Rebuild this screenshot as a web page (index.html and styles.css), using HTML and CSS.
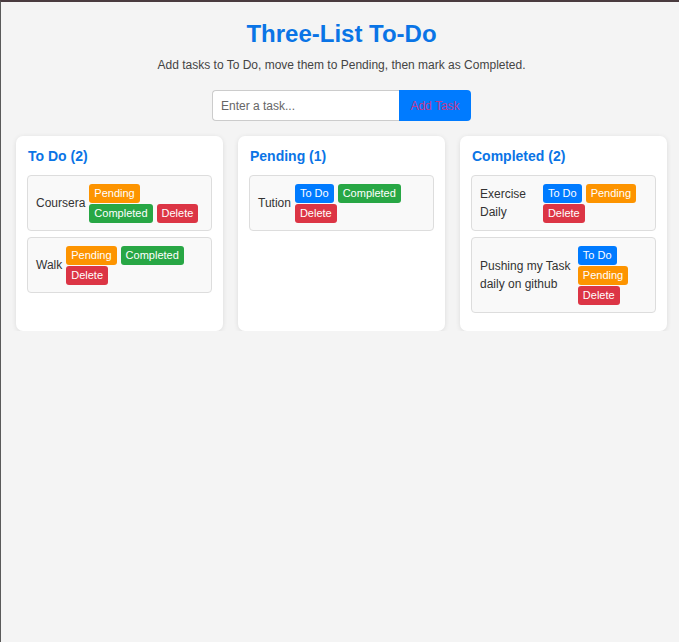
FILE: index.html
```html
<!DOCTYPE html>
<html lang="en">
<head>
<meta charset="utf-8">
<title>Three-List To-Do</title>
<link rel="stylesheet" href="styles.css">
</head>
<body>
<h1 class="title">Three-List To-Do</h1>
<p class="subtitle">Add tasks to To Do, move them to Pending, then mark as Completed.</p>
<div class="add-row">
  <input class="task-input" type="text" placeholder="Enter a task...">
  <button class="add-btn">Add Task</button>
</div>
<div class="lists">
  <section class="card">
    <h3 class="card-title">To Do (2)</h3>
    <div class="item">
      <span class="item-text">Coursera</span>
      <div class="actions">
        <button class="btn btn-pending">Pending</button>
        <button class="btn btn-completed">Completed</button>
        <button class="btn btn-delete">Delete</button>
      </div>
    </div>
    <div class="item">
      <span class="item-text">Walk</span>
      <div class="actions">
        <button class="btn btn-pending">Pending</button>
        <button class="btn btn-completed">Completed</button>
        <button class="btn btn-delete">Delete</button>
      </div>
    </div>
  </section>
  <section class="card">
    <h3 class="card-title">Pending (1)</h3>
    <div class="item">
      <span class="item-text">Tution</span>
      <div class="actions">
        <button class="btn btn-todo">To Do</button>
        <button class="btn btn-completed">Completed</button>
        <button class="btn btn-delete">Delete</button>
      </div>
    </div>
  </section>
  <section class="card">
    <h3 class="card-title">Completed (2)</h3>
    <div class="item">
      <span class="item-text">Exercise Daily</span>
      <div class="actions">
        <button class="btn btn-todo">To Do</button>
        <button class="btn btn-pending">Pending</button>
        <button class="btn btn-delete">Delete</button>
      </div>
    </div>
    <div class="item">
      <span class="item-text">Pushing my Task daily on github</span>
      <div class="actions">
        <button class="btn btn-todo">To Do</button>
        <button class="btn btn-pending">Pending</button>
        <button class="btn btn-delete">Delete</button>
      </div>
    </div>
  </section>
</div>
</body>
</html>
```
FILE: styles.css
```css
html {
  border-top: 2px solid #4a3b3f;
  border-left: 1px solid #5a5a5a;
  background: #f4f4f4;
  min-height: 100%;
  box-sizing: border-box;
}
body {
  margin: 0;
  padding: 18px 12px 0 15px;
  font-family: "Liberation Sans", Arial, sans-serif;
  color: #333;
  background: #f4f4f4;
}
.title {
  margin: 0;
  text-align: center;
  font-size: 24px;
  line-height: 28px;
  font-weight: bold;
  color: #0a74e6;
}
.subtitle {
  margin: 10px 0 0;
  text-align: center;
  font-size: 12px;
  line-height: 14px;
  color: #444;
}
.add-row {
  display: flex;
  justify-content: center;
  margin-top: 18px;
}
.task-input {
  box-sizing: border-box;
  width: 187px;
  height: 31px;
  padding: 0 8px;
  border: 1px solid #ccc;
  border-right: none;
  border-radius: 4px 0 0 4px;
  font-family: "Liberation Sans", Arial, sans-serif;
  font-size: 12px;
  color: #333;
  background: #fff;
  outline: none;
}
.task-input::placeholder {
  color: #666;
}
.add-btn {
  box-sizing: border-box;
  width: 72px;
  height: 31px;
  border: none;
  border-radius: 0 4px 4px 0;
  background: #007bff;
  color: #c2398f;
  font-family: "Liberation Sans", Arial, sans-serif;
  font-size: 12px;
  padding: 0;
}
.lists {
  display: grid;
  grid-template-columns: repeat(3, 1fr);
  gap: 15px;
  margin-top: 15px;
}
.card {
  background: #fff;
  border-radius: 7px;
  padding: 12px 11px;
  box-shadow: 0 1px 5px rgba(0, 0, 0, 0.1);
}
.card-title {
  margin: 0 0 11px;
  padding-left: 1px;
  font-size: 14px;
  line-height: 16px;
  font-weight: bold;
  color: #0a74e6;
}
.item {
  display: flex;
  align-items: center;
  gap: 4px;
  padding: 7.5px 8px;
  margin-bottom: 6px;
  border: 1px solid #ddd;
  border-radius: 4px;
  background: #f9f9f9;
}
.item-text {
  flex-shrink: 0.9;
  font-size: 12px;
  line-height: 18px;
  color: #333;
}
.actions {
  display: flex;
  flex-wrap: wrap;
  gap: 1px 4px;
}
.btn {
  border: none;
  border-radius: 3px;
  padding: 3px 5px;
  font-family: "Liberation Sans", Arial, sans-serif;
  font-size: 11px;
  line-height: 13px;
  color: #fff;
}
.btn-pending { background: #fd9400; }
.btn-completed { background: #28a745; }
.btn-delete { background: #dc3545; }
.btn-todo { background: #007bff; }
```
